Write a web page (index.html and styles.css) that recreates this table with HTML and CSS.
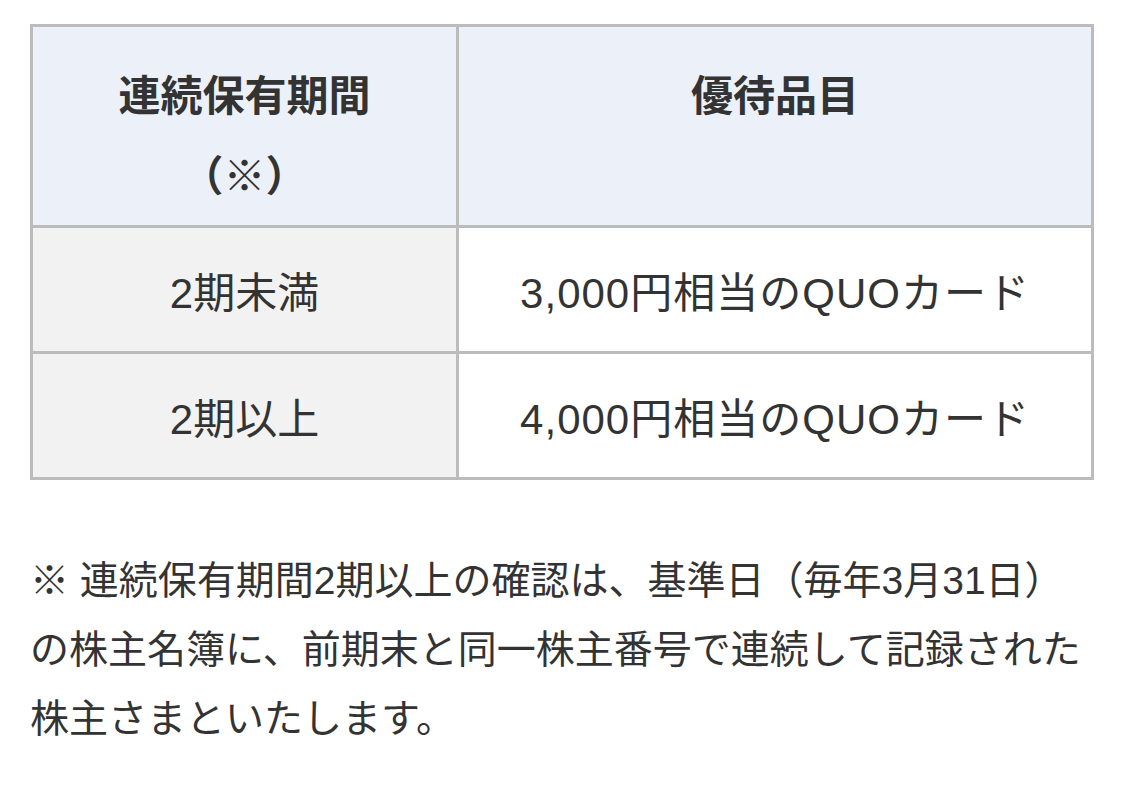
FILE: index.html
```html
<!DOCTYPE html>
<html lang="ja">
<head>
<meta charset="utf-8">
<link rel="stylesheet" href="styles.css">
</head>
<body>
<table class="perk">
  <thead>
    <tr>
      <th class="col-period">連続保有期間<br>（※）</th>
      <th class="col-item">優待品目</th>
    </tr>
  </thead>
  <tbody>
    <tr>
      <td class="cell-period">2期未満</td>
      <td class="cell-item">3,000円相当のQUOカード</td>
    </tr>
    <tr>
      <td class="cell-period">2期以上</td>
      <td class="cell-item">4,000円相当のQUOカード</td>
    </tr>
  </tbody>
</table>
<p class="note">※ 連続保有期間2期以上の確認は、基準日（毎年3月31日）の株主名簿に、前期末と同一株主番号で連続して記録された株主さまといたします。</p>
</body>
</html>
```

FILE: styles.css
```css
html, body {
  margin: 0;
  background: #ffffff;
}
body {
  padding: 24px 30px 0 30px;
  font-family: "Liberation Sans", "Noto Sans CJK JP", sans-serif;
  color: #333333;
}
.perk {
  width: 1064px;
  border-collapse: collapse;
  border: 3px solid #bcbcbc;
  table-layout: fixed;
}
.perk th, .perk td {
  border: 3px solid #bcbcbc;
  text-align: center;
  vertical-align: middle;
}
.perk th {
  background: #ebf0f9;
  font-size: 42px;
  font-weight: bold;
  line-height: 80px;
  padding: 30px 10px 8px;
  height: 160px;
  vertical-align: top;
}
.col-period {
  width: 403px;
}
.perk td {
  font-size: 42px;
  font-weight: normal;
  line-height: 75px;
  padding: 28px 10px 20px;
}
.cell-period {
  background: #f2f2f2;
}
.cell-item {
  background: #ffffff;
  letter-spacing: 1px;
}
.note {
  margin: 66px 0 0 0;
  font-size: 39px;
  line-height: 69px;
  letter-spacing: 0;
}
```
